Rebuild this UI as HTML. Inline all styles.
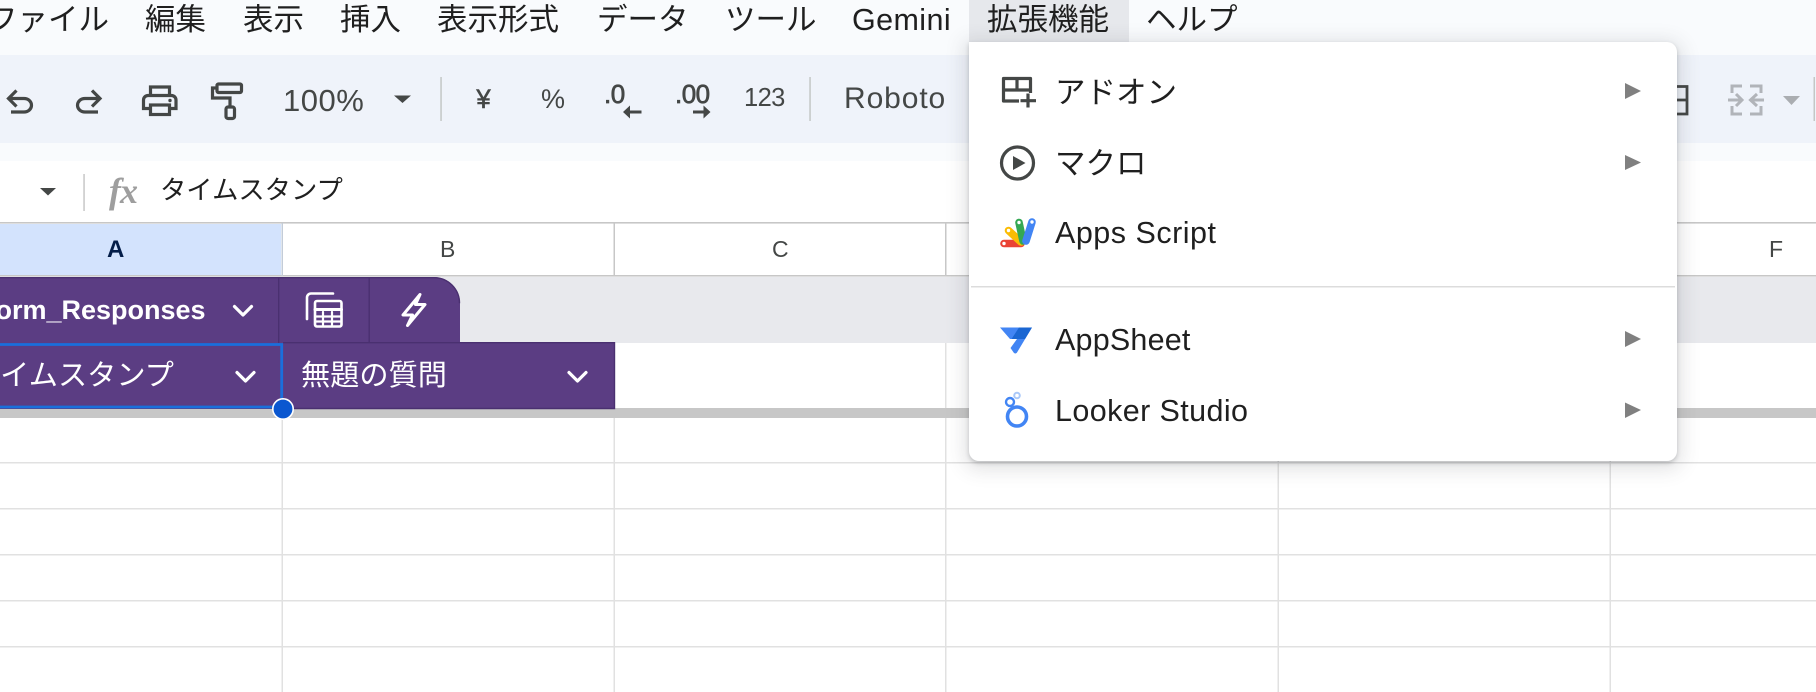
<!DOCTYPE html>
<html lang="ja"><head><meta charset="utf-8"><title>Sheets</title>
<style>
html,body{margin:0;padding:0;width:1816px;height:692px;overflow:hidden;background:#fff}
body{position:relative;font-family:"Liberation Sans","Noto Sans CJK JP",sans-serif;color:#1f1f1f}
.b{position:absolute}
.t{position:absolute;white-space:nowrap;line-height:1;font-size:30.5px}
.g{color:#444746}
.w{color:#fff}
svg{position:absolute;left:0;top:0}
#menu{position:absolute;left:969px;top:42px;width:708px;height:419px;background:#fff;border-radius:0 0 10px 10px;border-top-right-radius:10px;box-shadow:0 2px 4px rgba(60,64,67,.25),0 4px 18px 6px rgba(60,64,67,.13)}
</style></head><body>
<div class="b" style="left:0;top:0;width:1816px;height:161px;background:#f9fbfd"></div>
<div class="b" style="left:0;top:55px;width:1816px;height:88px;background:#eff3fa"></div>

<div class="t" style="left:-13px;top:5px">ファイル</div>
<div class="t" style="left:145px;top:5px">編集</div>
<div class="t" style="left:243px;top:5px">表示</div>
<div class="t" style="left:340px;top:5px">挿入</div>
<div class="t" style="left:437px;top:5px">表示形式</div>
<div class="t" style="left:597px;top:5px">データ</div>
<div class="t" style="left:725px;top:5px">ツール</div>
<div class="t" style="left:852px;top:5px;font-size:30.5px;letter-spacing:.4px">Gemini</div>
<div class="b" style="left:969px;top:0;width:160px;height:42px;background:#e6e8ec"></div>
<div class="t" style="left:987px;top:5px">拡張機能</div>
<div class="t" style="left:1146px;top:5px">ヘルプ</div>

<div class="t g" style="left:283px;top:85px;font-size:31px;letter-spacing:.5px">100%</div>
<div class="t g" style="left:476px;top:86px;font-size:27px;font-weight:400;-webkit-text-stroke:.6px #444746;transform:scaleX(.95)">¥</div>
<div class="t g" style="left:541px;top:86px;font-size:27px">%</div>
<div class="t g" style="left:604px;top:81px;font-size:26px;font-weight:400;-webkit-text-stroke:.7px #444746;letter-spacing:-.5px">.0</div>
<div class="t g" style="left:675px;top:81px;font-size:26px;font-weight:400;-webkit-text-stroke:.7px #444746;letter-spacing:-.5px">.00</div>
<div class="t g" style="left:744px;top:86px;font-size:25.5px;letter-spacing:-.6px">123</div>
<div class="t g" style="left:844px;top:84px;font-size:30px;letter-spacing:.9px">Roboto</div>

<div class="t" style="left:160px;top:177px;font-size:26.300px;color:#1f1f1f">タイムスタンプ</div>
<div class="t" style="left:109px;top:173px;font-family:'Liberation Serif',serif;font-style:italic;font-weight:700;font-size:36px;color:#9e9e9e;letter-spacing:-1px">fx</div>

<svg width="1816" height="692" viewBox="0 0 1816 692" fill="none">
  <!-- header -->
  <rect x="0" y="224" width="281" height="52" fill="#d3e3fd"/>
  <rect x="0" y="222" width="1816" height="1.6" fill="#c7c7c7"/>
  <rect x="0" y="275" width="1816" height="1.6" fill="#c7c7c7"/>
  <g fill="#c7c7c7">
    <rect x="281.5" y="223" width="1.5" height="53" fill="#c3ccd8"/>
    <rect x="613.500" y="223" width="1.5" height="53"/>
    <rect x="945" y="223" width="1.5" height="53"/>
    <rect x="1277.500" y="223" width="1.5" height="53"/>
    <rect x="1609.500" y="223" width="1.5" height="53"/>
  </g>
  <!-- table band -->
  <rect x="0" y="277" width="1816" height="66" fill="#e8e9ed"/>
  <!-- grid -->
  <g fill="#e1e1e1">
    <rect x="0" y="462" width="1816" height="1.5"/>
    <rect x="0" y="508" width="1816" height="1.5"/>
    <rect x="0" y="554" width="1816" height="1.5"/>
    <rect x="0" y="600" width="1816" height="1.5"/>
    <rect x="0" y="646" width="1816" height="1.5"/>
    <rect x="281.5" y="418" width="1.5" height="274"/>
    <rect x="613.500" y="418" width="1.5" height="274"/>
    <rect x="945" y="343" width="1.5" height="349"/>
    <rect x="1277.500" y="418" width="1.5" height="274"/>
    <rect x="1609.500" y="418" width="1.5" height="274"/>
  </g>
  <rect x="0" y="408" width="1816" height="10" fill="#c7c7c7"/>
  <!-- tab -->
  <path d="M0 277H434a26 26 0 0 1 26 26V343H0Z" fill="#5b3d83"/>
  <path d="M0 277.700H434a25.500 25.500 0 0 1 25.500 25.500" stroke="#4a3070" stroke-width="1.4"/>
  <rect x="278" y="278" width="1.4" height="65" fill="#4a3070"/>
  <rect x="368.500" y="278" width="1.4" height="65" fill="#4a3070"/>
  <rect x="0" y="343" width="614" height="66" fill="#5b3d83"/>
  <path d="M283 342.700H614.500V408.500H283" stroke="#4a3070" stroke-width="1.4"/>
  <!-- selection -->
  <path d="M0 344.500H281.700V407H0" stroke="#1a6fdc" stroke-width="2.8"/>
  <circle cx="283" cy="409" r="10.200" fill="#0b57d0" stroke="#fff" stroke-width="1.6"/>
  <!-- chevrons -->
  <g stroke="#fff" stroke-width="3.200" stroke-linecap="round" stroke-linejoin="round">
    <path d="M234.500 306.500L243 315L251.500 306.500"/>
    <path d="M237 372.500L245.500 381L254 372.500"/>
    <path d="M569 372.500L577.500 381L586 372.500"/>
  </g>
  <!-- calculator -->
  <g stroke="#fff" stroke-width="2.600" stroke-linecap="round" stroke-linejoin="round">
    <path d="M333 293.500H311a4 4 0 0 0-4 4V319"/>
    <rect x="315" y="301" width="26.500" height="25.500" rx="2"/>
    <path d="M315 309.500H341.500" stroke-width="3"/>
    <path d="M323 312V325M332 312V325M316 316.500H341M316 321.500H341" stroke-width="2.200"/>
    <path d="M420 294.500L403 315H412.500L407.500 325.500L425 304.500H415.500Z" stroke-width="3"/>
  </g>
  <!-- toolbar icons -->
  <g stroke="#444746" stroke-width="3.200" stroke-linecap="butt" stroke-linejoin="miter">
    <path d="M16.500 90.500L8.500 98.500L16.500 106.500M8.500 98.500H24c4.500 0 7.500 3.200 7.500 6.700S28.500 112 24 112H11"/>
    <path d="M92 90.500L100 98.500L92 106.500M100 98.500H85c-4.500 0-7.500 3.200-7.500 6.700s3 6.800 7.500 6.800H98"/>
    <path d="M150.500 95V87H169.500V95"/>
    <path d="M150.500 108.500H143.500V100a4.500 4.500 0 0 1 4.500-4.500H171.500a4.500 4.500 0 0 1 4.500 4.500V108.500H169"/>
    <rect x="150.500" y="105" width="19" height="9.500"/>
    <rect x="217" y="84" width="24.500" height="8.500" rx="1.500"/>
    <path d="M217 88H212.500V98H230V106"/>
    <rect x="226" y="107" width="8.500" height="11.500" rx="2"/>
  </g>
  <circle cx="170" cy="100.500" r="1.700" fill="#444746"/>
  <g fill="#444746">
    <path d="M394 95.500H411L402.500 103Z"/>
    <path d="M40 188H56L48 195.500Z"/>
    <path d="M623 112L630 105.500V110.500H641.500V113.500H630V118.500Z"/>
    <path d="M710.500 112L703.500 105.500V110.500H693V113.500H703.500V118.500Z"/>
  </g>
  <rect x="440.300" y="77" width="1.500" height="44" fill="#c4c7c5"/>
  <rect x="809.300" y="77" width="1.500" height="44" fill="#c4c7c5"/>
  <rect x="83.300" y="174" width="1.500" height="37" fill="#c7c7c7"/>
  <!-- behind menu right -->
  <path d="M1670 86.500H1687V114H1670M1670 100H1687" stroke="#444746" stroke-width="2.800"/>
  <g stroke="#b1b4b9" stroke-width="3">
    <path d="M1742 86H1732V93M1732 106V114H1742M1750 86H1761V93M1761 106V114H1750"/>
    <path d="M1728 100H1741M1736 94L1742 100L1736 106M1764 100H1751M1757 94L1750.500 100L1757 106"/>
  </g>
  <path d="M1783 96H1800L1791.500 105Z" fill="#aaadb1"/>
  <rect x="1813.500" y="77" width="1.500" height="44" fill="#c4c7c5"/>
</svg>

<div class="t w" style="left:-21px;top:297px;font-size:27px;font-weight:700;letter-spacing:0">Form_Responses</div>
<div class="t w" style="left:-29px;top:362px;font-size:29.200px">タイムスタンプ</div>
<div class="t w" style="left:301px;top:362px;font-size:29.200px">無題の質問</div>
<div class="t" style="left:107px;top:238px;font-size:24px;font-weight:700;color:#041e49">A</div>
<div class="t g" style="left:440px;top:238px;font-size:23px">B</div>
<div class="t g" style="left:772px;top:238px;font-size:23px">C</div>
<div class="t g" style="left:1769px;top:238px;font-size:23px">F</div>

<div id="menu"></div>
<svg width="1816" height="692" viewBox="0 0 1816 692" fill="none">
  <rect x="971" y="286" width="704" height="1.500" fill="#dcdcdc"/>
  <g fill="#808080">
    <path d="M1625 83L1641 91L1625 99Z"/>
    <path d="M1625 155L1641 162.500L1625 170Z"/>
    <path d="M1625 331L1641 339L1625 347Z"/>
    <path d="M1625 402.500L1641 410L1625 418Z"/>
  </g>
  <!-- add-on -->
  <g stroke="#444746" stroke-width="3.200" fill="none" stroke-linejoin="round">
    <path d="M1030.500 93V78.500H1003.500V101H1019"/>
    <path d="M1003.500 90H1030.500M1017 79V90"/>
    <path d="M1028 93.500V107.500M1020.500 100.700H1036"/>
  </g>
  <!-- macro -->
  <circle cx="1017.500" cy="163" r="16" stroke="#444746" stroke-width="3.200"/>
  <path d="M1013 156L1025.500 163L1013 170Z" fill="#444746"/>
  <!-- apps script -->
  <g stroke-linecap="round" stroke-width="7.600">
    <path d="M1004 243.500H1021" stroke="#ea4335"/>
    <path d="M1008.500 230.500L1021 242" stroke="#fbbc04"/>
    <path d="M1019 222.500L1023 241" stroke="#34a853"/>
    <path d="M1032 222L1026 241" stroke="#4285f4"/>
  </g>
  <g fill="#fff"><circle cx="1004" cy="243.500" r="1.700"/><circle cx="1008.500" cy="230.500" r="1.700"/><circle cx="1019" cy="222.500" r="1.700"/><circle cx="1032" cy="222" r="1.700"/></g>
  <!-- appsheet -->
  <path d="M1000 327.500H1032L1017 352.500a2 2 0 0 1-3.200 .3L1010.500 348L1017 339H1010Z" fill="#4285f4"/>
  <path d="M1019 327.500H1032L1025 339H1011.500Z" fill="#1a66d2"/>
  <!-- looker -->
  <circle cx="1017" cy="416.500" r="9.500" stroke="#4285f4" stroke-width="3.600"/>
  <circle cx="1010" cy="402" r="4" stroke="#4285f4" stroke-width="2.400"/>
  <circle cx="1017" cy="395.500" r="2.800" stroke="#aac8f8" stroke-width="2"/>
</svg>
<div class="t" style="left:1055px;top:78px">アドオン</div>
<div class="t" style="left:1055px;top:149px">マクロ</div>
<div class="t" style="left:1055px;top:218px;font-size:30.5px;letter-spacing:.5px">Apps Script</div>
<div class="t" style="left:1055px;top:325px;font-size:30.5px;letter-spacing:.2px">AppSheet</div>
<div class="t" style="left:1055px;top:396px;font-size:30.5px;letter-spacing:.4px">Looker Studio</div>
</body></html>
